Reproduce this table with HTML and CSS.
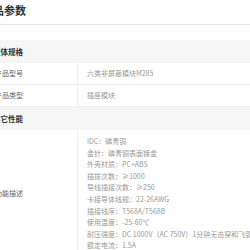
FILE: index.html
```html
<!DOCTYPE html>
<html lang="zh-CN">
<head>
    <meta charset="UTF-8">
    <meta name="viewport" content="width=device-width, initial-scale=1.0">
    <title>产品参数</title>
    <link rel="stylesheet" href="styles.css">
</head>
<body>
    <div class="params">
        <h2 class="params-title">产品参数</h2>

        <div class="spec-table">
            <div class="spec-group">整体规格</div>
            <div class="spec-row">
                <div class="spec-label">产品型号</div>
                <div class="spec-value">六类非屏蔽模块M285</div>
            </div>
            <div class="spec-row">
                <div class="spec-label">产品类型</div>
                <div class="spec-value">插座模块</div>
            </div>

            <div class="spec-group">其它性能</div>
            <div class="spec-row">
                <div class="spec-label spec-label-middle">功能描述</div>
                <div class="spec-value spec-lines">
                    <p>IDC：磷青铜</p>
                    <p>金针：磷青铜表面镀金</p>
                    <p>外壳材质：PC+ABS</p>
                    <p>插拔次数：≥1000</p>
                    <p>导线插接次数：≥250</p>
                    <p>卡接导体线规：22-26AWG</p>
                    <p>插接线序：T568A/T568B</p>
                    <p>使用温度：-25-60℃</p>
                    <p>耐压强度：DC 1000V（AC 750V）1分钟无击穿和飞弧</p>
                    <p>额定电流：1.5A</p>
                </div>
            </div>
        </div>
    </div>
</body>
</html>
```

FILE: styles.css
```css
* {
    margin: 0;
    padding: 0;
    box-sizing: border-box;
    font-family: "Noto Sans CJK SC", "Noto Sans", sans-serif;
}
body {
    background: #fff;
    overflow: hidden;
}
.params {
    margin-left: -12px;
    width: 300px;
}
.params-title {
    margin-left: -6px;
    padding: 3px 0 6px;
    font-size: 11px;
    line-height: 15px;
    font-weight: bold;
    color: #333;
    border-bottom: 1px solid #e8e8e8;
}
.spec-table {
    margin-top: 15px;
}
.spec-group {
    background: #f6f6f6;
    padding: 0 5px;
    height: 23px;
    line-height: 23px;
    font-size: 7.5px;
    font-weight: bold;
    color: #333;
}
.spec-row {
    display: grid;
    grid-template-columns: 90px 1fr;
    border-bottom: 1px solid #f0f0f0;
}
.spec-label {
    padding: 0 7px;
    min-height: 21px;
    line-height: 21px;
    font-size: 7px;
    color: #666;
    border-right: 1px solid #f0f0f0;
}
.spec-label-middle {
    display: flex;
    align-items: center;
}
.spec-value {
    padding: 0 9px;
    line-height: 21px;
    font-size: 7px;
    color: #999;
    white-space: nowrap;
}
.spec-lines {
    padding-top: 6px;
    padding-bottom: 6px;
    line-height: 11.6px;
}
```
